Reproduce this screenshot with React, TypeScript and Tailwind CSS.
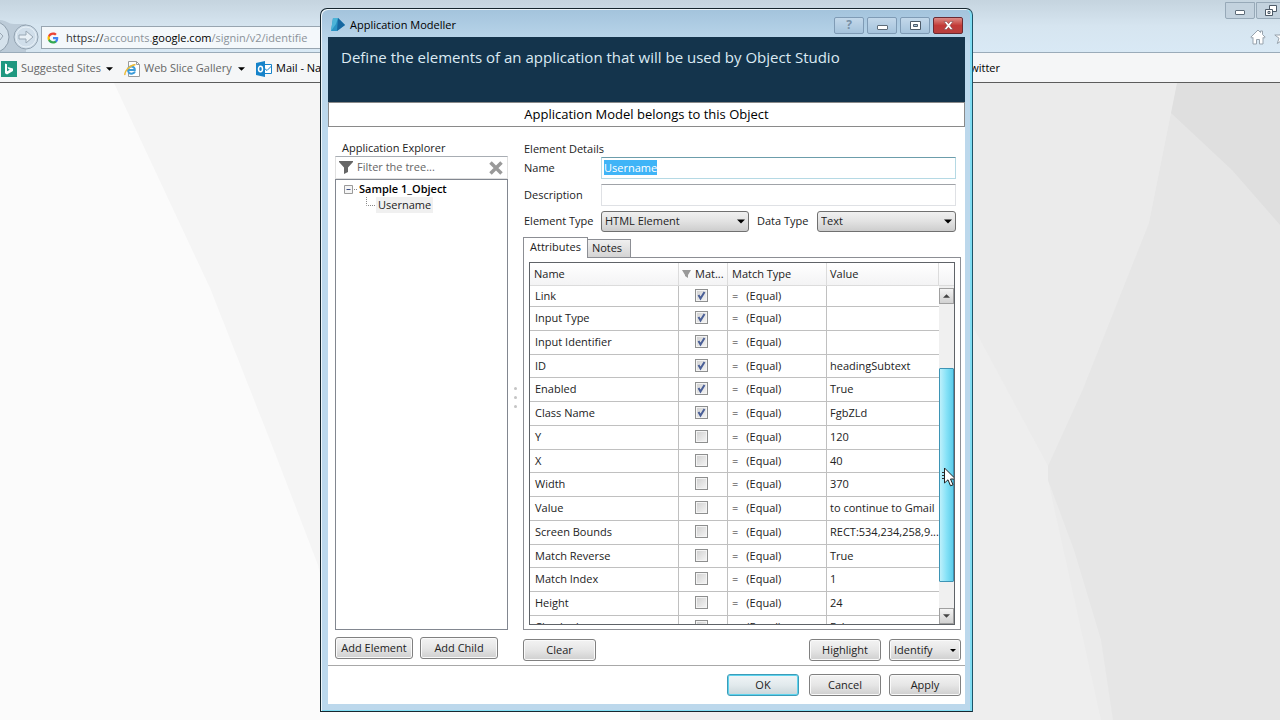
import { useEffect, useRef } from 'react';

type Attribute = { name: string; match: boolean; value: string };

const attributes: Attribute[] = [
    { name: 'Link', match: true, value: '' },
    { name: 'Input Type', match: true, value: '' },
    { name: 'Input Identifier', match: true, value: '' },
    { name: 'ID', match: true, value: 'headingSubtext' },
    { name: 'Enabled', match: true, value: 'True' },
    { name: 'Class Name', match: true, value: 'FgbZLd' },
    { name: 'Y', match: false, value: '120' },
    { name: 'X', match: false, value: '40' },
    { name: 'Width', match: false, value: '370' },
    { name: 'Value', match: false, value: 'to continue to Gmail' },
    { name: 'Screen Bounds', match: false, value: 'RECT:534,234,258,9...' },
    { name: 'Match Reverse', match: false, value: 'True' },
    { name: 'Match Index', match: false, value: '1' },
    { name: 'Height', match: false, value: '24' },
    { name: 'Checked', match: false, value: 'False' },
];

const buttonStyle =
    'h-[22px] rounded-[3px] border border-[#808080] bg-gradient-to-b from-[#f3f3f3] via-[#e6e6e6] to-[#cfcfcf] text-center shadow-[inset_0_0_0_1px_#fafafa]';
const selectStyle =
    'h-[21px] w-full appearance-none rounded-[3px] border border-[#707070] bg-gradient-to-b from-[#f0f0f0] via-[#e2e2e2] to-[#cdcdcd] pl-[3px] outline-none';

function DownArrow({ className }: { className: string }) {
    return (
        <svg viewBox="0 0 8 4" className={className} aria-hidden="true">
            <path d="M0 0h8L4 4z" fill="currentColor" />
        </svg>
    );
}

function BrowserWindow() {
    return (
        <div className="flex h-screen flex-col overflow-hidden bg-[#f7f7f7]">
            <header className="flex h-[53px] shrink-0 justify-between border-b border-[#9aabb9] bg-gradient-to-b from-[#c5d4df] via-[#d6e5f0] to-[#d9e9f5]">
                <div className="flex w-[600px] items-end">
                    <svg width="41" height="33" viewBox="0 0 41 33" fill="none" aria-hidden="true">
                        <path d="M0 1C6 1 8 5 14 5h16v28H0z" fill="#bccbd8" />
                        <path d="M26 5h15v28H26z" fill="#d6e5f0" />
                        <circle cx="-7" cy="18" r="16" fill="#d5e2ec" stroke="#8e9eac" />
                        <path d="M0 14l3 3-3 4" stroke="#9aa7b3" />
                        <circle cx="26" cy="18" r="12" fill="#d0deea" stroke="#93a3b1" />
                        <circle cx="26" cy="18" r="10" stroke="#e6f0f7" />
                        <path d="M19 16h7v-4l7 6-7 6v-4h-7z" fill="#e8f0f6" stroke="#99a8b5" />
                    </svg>
                    <div className="mb-[3px] flex h-[23px] flex-1 items-center border border-[#98a5b0] bg-[#f4f8fb]">
                        <svg className="ml-[5px] size-3" viewBox="0 0 24 24" aria-hidden="true">
                            <path d="M22.5 12.3c0-.8-.1-1.500-.2-2.300H12v4.500h5.900c-.3 1.400-1 2.500-2.200 3.300v2.800h3.600c2-1.900 3.200-4.700 3.200-8.300z" fill="#4285f4" />
                            <path d="M12 23c3 0 5.500-1 7.300-2.700l-3.600-2.800c-1 .7-2.200 1.100-3.700 1.100-2.900 0-5.300-1.900-6.200-4.500H2.200v2.800C4 20.500 7.700 23 12 23z" fill="#34a853" />
                            <path d="M5.800 14.100c-.5-1.400-.5-2.800 0-4.200V7.100H2.200c-1.600 3.100-1.600 6.700 0 9.800z" fill="#fbbc05" />
                            <path d="M12 5.400c1.600 0 3.100.6 4.200 1.600l3.200-3.200C17.500 2 15 1 12 1 7.700 1 4 3.500 2.200 7.100l3.600 2.800C6.700 7.300 9.100 5.400 12 5.400z" fill="#ea4335" />
                        </svg>
                        <span className="ml-[7px] pt-0.5 whitespace-nowrap text-[#8b9299]">
                            <span className="text-[#333]">https://</span>accounts.<span className="text-black">google.com</span>/signin/v2/identifie
                        </span>
                    </div>
                </div>
                <div className="w-[55px]">
                    <div className="flex gap-px pt-[2px]">
                        <button type="button" aria-label="Minimize browser" className="flex h-[17px] w-[30px] shrink-0 items-center justify-center rounded-b-[2px] border border-[#97a9b8] bg-[#c3d2de]">
                            <span className="mt-1 h-[5px] w-[10px] rounded-[1px] border border-[#5d6b78] bg-white"></span>
                        </button>
                        <button type="button" aria-label="Restore browser" className="flex h-[17px] w-[30px] shrink-0 items-center justify-center rounded-b-[2px] border border-[#97a9b8] bg-[#c3d2de]">
                            <svg width="12" height="11" viewBox="0 0 12 11" fill="#fff" stroke="#4e5b68" aria-hidden="true">
                                <path d="M4.500.5h7v6h-7z" />
                                <path d="M.5 4.500h7v6h-7z" />
                                <path d="M3 6.500h2v2H3z" />
                            </svg>
                        </button>
                    </div>
                    <div className="flex gap-2 pt-[10px] pl-[25px]">
                        <svg className="shrink-0" width="16" height="16" viewBox="0 0 16 16" fill="#fff" stroke="#98a3ad" aria-hidden="true">
                            <path d="M8 1L.8 8.200l1.200 1L3 8.400V15h3.500v-4.500h3V15H13V8.400l1 .8 1.200-1L12.500 5.500V2h-2v1.500z" />
                        </svg>
                        <svg className="shrink-0" width="16" height="16" viewBox="0 0 16 16" fill="#fff" stroke="#98a3ad" aria-hidden="true">
                            <path d="M8 1l2 5h5.200L11 9.200l1.700 5.300L8 11.300l-4.700 3.200L5 9.200.8 6H6z" />
                        </svg>
                    </div>
                </div>
            </header>

            <nav className="flex h-[30px] shrink-0 items-center justify-between border-b border-[#5c5c5c] bg-[#f5f6f7] pt-0.5 text-[#666]">
                <div className="flex items-center whitespace-nowrap">
                    <svg className="ml-px" width="16" height="16" viewBox="0 0 16 16" aria-hidden="true">
                        <path d="M0 0h16v16H0z" fill="#1f9880" />
                        <path d="M4 2.500l2 .8v6.900l2.800-1.500-1.400-.7-.9-2.100L12 7.600V10l-6 3.500-2-1.200z" fill="#fff" />
                    </svg>
                    <a href="#suggested" className="ml-1 w-[83px]">Suggested Sites</a>
                    <DownArrow className="ml-0.5 h-1 w-[7px] text-black" />
                    <svg className="ml-[11px]" width="16" height="16" viewBox="0 0 16 16" fill="none" aria-hidden="true">
                        <path d="M4.500.5h8l3 3v12h-11z" fill="#fff" stroke="#9c9c9c" />
                        <path d="M12.500.5v3h3" stroke="#9c9c9c" />
                        <path d="M11 10.500c-.7 2-4 3-6 1.200-2-2-1-6 2-6.200 2.500-.1 4 1.500 3.800 3.500H3.500" stroke="#3c9bd8" strokeWidth="2" />
                        <path d="M1 14C0 11 5 4.500 11.500 3.500" stroke="#edbb38" strokeWidth="1.500" />
                    </svg>
                    <a href="#gallery" className="ml-1 w-[92px]">Web Slice Gallery</a>
                    <DownArrow className="ml-0.5 h-1 w-[7px] text-black" />
                    <svg className="ml-[11px]" width="16" height="16" viewBox="0 0 16 16" fill="none" aria-hidden="true">
                        <path d="M8 3.500h7.500v9H8z" fill="#fff" stroke="#1683ca" />
                        <path d="M8 7l3 2.500L15.500 5" stroke="#1683ca" />
                        <path d="M0 2l9-2v16l-9-2z" fill="#1683ca" />
                        <ellipse cx="4.500" cy="8" rx="2" ry="2.700" stroke="#fff" strokeWidth="1.500" />
                    </svg>
                    <a href="#mail" className="ml-1 text-black">Mail - Nandan</a>
                </div>
                <a href="#twitter" className="mr-[280px] text-black">Twitter</a>
            </nav>

            <main className="min-h-0 flex-1">
                <svg className="size-full" viewBox="0 0 1280 637" preserveAspectRatio="none" aria-hidden="true">
                    <path d="M0 0h640v637H0z" fill="#fbfbfb" />
                    <path d="M114 0h526v620H352L318 482 275 370 210 205z" fill="#f5f5f5" />
                    <path d="M640 0h640v637H640z" fill="#ebebeb" />
                    <path d="M970 238l78 145v14l53 240H640V200z" fill="#eeeeee" />
                    <path d="M1171 30l-22 110-66 166-35 77v14l26 70 27 90 12 80h167V30z" fill="#e6e6e6" />
                    <path d="M1177 0h103v142l-48-55-61-57z" fill="#dfdfdf" />
                </svg>
            </main>
        </div>
    );
}

function TitleBar() {
    const controlStyle = 'flex h-[17px] w-[30px] items-center justify-center rounded-[2px] border border-[#7f9bb5] bg-gradient-to-b from-[#c3d8ea] to-[#a5c3dc]';
    return (
        <div className="flex h-7 shrink-0 items-center pt-1">
            <svg className="ml-[3px]" width="14" height="14" viewBox="0 0 14 14" aria-hidden="true">
                <path d="M2 0h5l7 7-8 6H0z" fill="#2a93c4" />
                <path d="M7 0l7 7-8 6z" fill="#1767a0" />
                <path d="M2 0h5l-2 6-5 7z" fill="#4cb4d8" />
            </svg>
            <h1 className="ml-[5px] flex-1 text-black">Application Modeller</h1>
            <div className="mr-0.5 flex gap-[3px]">
                <button type="button" aria-label="Help" className={controlStyle}>
                    <span className="text-xs leading-3 font-bold text-[#7890a6]">?</span>
                </button>
                <button type="button" aria-label="Minimize" className={controlStyle}>
                    <span className="mt-1 h-[5px] w-[11px] rounded-[1px] border border-[#5d6b78] bg-white"></span>
                </button>
                <button type="button" aria-label="Maximize" className={controlStyle}>
                    <svg width="11" height="9" viewBox="0 0 11 9" aria-hidden="true">
                        <path d="M.5.5h10v8H.5z" fill="#fff" stroke="#4e5b68" />
                        <path d="M3.500 3.500h4v2h-4z" fill="#a9c4db" stroke="#4e5b68" />
                    </svg>
                </button>
                <button type="button" aria-label="Close" className="flex h-[17px] w-[30px] items-center justify-center rounded-[2px] border border-[#6b2a32] bg-gradient-to-b from-[#dc8a86] via-[#c23a38] to-[#b8403e]">
                    <svg width="11" height="9" viewBox="0 0 11 9" aria-hidden="true">
                        <path d="M1 .5h2.500l2 2.200 2-2.200H10L7 4.500l3 4H7.500l-2-2.200-2 2.200H1l3-4z" fill="#fff" stroke="#6d3a40" strokeWidth=".5" />
                    </svg>
                </button>
            </div>
        </div>
    );
}

function Explorer() {
    return (
        <section className="flex w-[173px] shrink-0 flex-col">
            <h2 className="h-[15px] pl-[7px] leading-[13px]">Application Explorer</h2>
            <div className="flex h-[23px] items-center border border-[#e0e0e0] border-t-[#a8adb3]">
                <svg className="ml-[3px] shrink-0" width="14" height="13" viewBox="0 0 14 13" aria-hidden="true">
                    <path d="M0 0h14v1L9 6.500V11l-4 2V6.500L0 1z" fill="#666" />
                </svg>
                <input
                    aria-label="Filter the tree"
                    placeholder="Filter the tree..."
                    className="ml-1 h-5 min-w-0 flex-1 pb-0.5 outline-none placeholder:text-[#666]"
                />
                <button type="button" aria-label="Clear filter" className="mr-1">
                    <svg width="14" height="14" viewBox="0 0 14 14" aria-hidden="true">
                        <path d="M1.500 1.500l11 11M12.500 1.500l-11 11" stroke="#999" strokeWidth="3.500" />
                    </svg>
                </button>
            </div>
            <div className="flex-1 border border-[#828790] pt-px pl-2">
                <div className="flex h-4 items-center">
                    <svg width="15" height="9" viewBox="0 0 15 9" fill="none" aria-hidden="true">
                        <path d="M.5.5h8v8h-8z" fill="#f5f5f5" stroke="#9a9a9a" />
                        <path d="M2.500 4.500h4" stroke="#3d4f86" />
                        <path d="M10 4.500h4" stroke="#888" strokeDasharray="1 1" />
                    </svg>
                    <span className="leading-4 font-semibold text-black">Sample 1_Object</span>
                </div>
                <div className="flex h-4 items-center pl-[22px]">
                    <svg width="10" height="16" viewBox="0 0 10 16" fill="none" aria-hidden="true">
                        <path d="M.5 0v8.500h9" stroke="#888" strokeDasharray="1 1" />
                    </svg>
                    <span className="bg-[#f0f0f0] px-0.5 leading-4">Username</span>
                </div>
            </div>
            <div className="mt-[7px] flex gap-[7px] pb-[6px]">
                <button type="button" className={`${buttonStyle} w-[78px]`}>Add Element</button>
                <button type="button" className={`${buttonStyle} w-[78px]`}>Add Child</button>
            </div>
        </section>
    );
}

function AttributeRow({ attribute }: { attribute: Attribute }) {
    return (
        <tr className="h-6 first:h-[21px] nth-[4n]:h-[23px]">
            <td className="border-r pl-[5px]">{attribute.name}</td>
            <td className="border-r pr-[3px]">
                <span className="relative mx-auto block size-[13px]">
                    <input
                        type="checkbox"
                        aria-label={`Match ${attribute.name}`}
                        defaultChecked={attribute.match}
                        className="peer block size-[13px] appearance-none border border-[#8e8f8f] bg-gradient-to-br from-[#cfcfcf] to-[#f6f6f6] shadow-[inset_0_0_0_1px_#f4f4f4]"
                    />
                    <svg viewBox="0 0 13 13" fill="none" className="pointer-events-none absolute inset-0 hidden peer-checked:block" aria-hidden="true">
                        <path d="M3.500 6l2 3.500L9.500 3" stroke="#4a5f97" strokeWidth="2" />
                    </svg>
                </span>
            </td>
            <td className="border-r pl-1">
                <span className="flex gap-2">
                    <span>=</span>
                    <span>(Equal)</span>
                </span>
            </td>
            <td className="pl-[3px] whitespace-nowrap">{attribute.value}</td>
        </tr>
    );
}

function AttributeTable() {
    return (
        <div className="flex min-h-0 flex-1 overflow-hidden border border-[#5f6368]">
            <div className="min-h-0 flex-1 overflow-hidden">
                <table className="w-full table-fixed border-separate border-spacing-0 text-left [&_td]:border-b [&_td]:border-[#c0c0c0] [&_td]:pt-0 [&_td]:pb-0.5 [&_td]:leading-[15px]">
                    <colgroup>
                        <col />
                        <col className="w-[49px]" />
                        <col className="w-[99px]" />
                        <col className="w-[112px]" />
                    </colgroup>
                    <thead>
                        <tr className="h-[23px] bg-gradient-to-b from-white to-[#f3f3f4] [&>th]:border-r [&>th]:border-b [&>th]:border-[#dcdcdc] [&>th]:font-normal">
                            <th className="pl-1">Name</th>
                            <th>
                                <span className="flex items-center gap-1 pl-[3px]">
                                    <svg width="9" height="8" viewBox="0 0 9 8" aria-hidden="true">
                                        <path d="M0 0h9L6 5v3L3 6V5z" fill="#999" />
                                    </svg>
                                    Mat...
                                </span>
                            </th>
                            <th className="pl-1">Match Type</th>
                            <th className="pl-[3px]">Value</th>
                        </tr>
                    </thead>
                    <tbody>
                        {attributes.map((attribute) => (
                            <AttributeRow key={attribute.name} attribute={attribute} />
                        ))}
                    </tbody>
                </table>
            </div>
            <div className="flex w-[15px] shrink-0 flex-col bg-[#f0f0f0]">
                <div className="h-[23px] shrink-0 border-b border-[#dcdcdc] bg-gradient-to-b from-white to-[#f3f3f4]"></div>
                <button type="button" aria-label="Scroll up" className="mt-0.5 flex h-4 shrink-0 items-center justify-center border border-[#a0a0a0] bg-gradient-to-b from-[#f4f4f4] to-[#d2d2d2]">
                    <DownArrow className="h-1 w-[7px] rotate-180 text-[#444]" />
                </button>
                <div className="relative flex-1 pt-16">
                    <div className="h-[214px] rounded-[1px] border border-[#3d94b5] bg-gradient-to-r from-[#bdf0fb] via-[#86e2f7] to-[#5bcdea]"></div>
                    <svg className="absolute top-[163px] left-[3px]" width="14" height="21" viewBox="0 0 14 21" aria-hidden="true">
                        <path d="M0 5.500h3M0 8.500h3M0 11.500h3" stroke="#333" />
                        <path d="M2.500 1v15l3.500-3.200 2.500 6 2.500-1-2.500-5.800h5z" fill="#fff" stroke="#222" />
                    </svg>
                </div>
                <button type="button" aria-label="Scroll down" className="flex h-4 shrink-0 items-center justify-center border border-[#a0a0a0] bg-gradient-to-b from-[#f4f4f4] to-[#d2d2d2]">
                    <DownArrow className="h-1 w-[7px] text-[#444]" />
                </button>
            </div>
        </div>
    );
}

function ElementDetails() {
    const nameRef = useRef<HTMLInputElement>(null);

    // The name is selected as soon as the element is opened
    useEffect(() => {
        nameRef.current?.focus();
        nameRef.current?.select();
    }, []);

    return (
        <section className="flex min-w-0 flex-1 flex-col">
            <h2 className="h-4 pl-px leading-[15px]">Element Details</h2>
            <div className="flex flex-col gap-[5px] pr-[5px] pl-px">
                <div className="flex items-center">
                    <label htmlFor="name" className="w-[77px]">Name</label>
                    <input
                        id="name"
                        ref={nameRef}
                        defaultValue="Username"
                        className="h-[22px] min-w-0 flex-1 border border-[#b5d9e4] border-t-[#6c9dab] px-0.5 pb-0.5 outline-none selection:bg-[#3fb4f7] selection:text-white"
                    />
                </div>
                <div className="flex items-center">
                    <label htmlFor="description" className="w-[77px]">Description</label>
                    <input id="description" className="h-[22px] min-w-0 flex-1 border border-[#dfe1e5] border-t-[#a0a3a8] px-0.5 outline-none" />
                </div>
                <div className="flex items-center">
                    <label htmlFor="element-type" className="w-[77px]">Element Type</label>
                    <div className="relative w-[148px]">
                        <select id="element-type" className={selectStyle}>
                            <option>HTML Element</option>
                        </select>
                        <DownArrow className="pointer-events-none absolute top-2 right-1 h-[5px] w-2 text-black" />
                    </div>
                    <label htmlFor="data-type" className="ml-2 w-[60px]">Data Type</label>
                    <div className="relative flex-1">
                        <select id="data-type" className={selectStyle}>
                            <option>Text</option>
                        </select>
                        <DownArrow className="pointer-events-none absolute top-2 right-1 h-[5px] w-2 text-black" />
                    </div>
                </div>
            </div>

            <div role="tablist" className="mt-[5px] flex items-end">
                <button type="button" role="tab" aria-selected="true" className="z-10 -mb-px h-[21px] w-[65px] border border-b-0 border-[#8c8e94] bg-white pb-0.5">
                    Attributes
                </button>
                <button type="button" role="tab" aria-selected="false" className="h-[18px] w-[43px] border border-b-0 border-l-0 border-[#8c8e94] bg-gradient-to-b from-[#f0f0f0] to-[#d4d4d4] pr-1">
                    Notes
                </button>
            </div>
            <div className="flex min-h-0 flex-1 flex-col border border-[#8c8e94] px-[5px] pt-1 pb-1">
                <AttributeTable />
            </div>

            <div className="mt-[9px] flex justify-between pb-1">
                <button type="button" className={`${buttonStyle} w-[73px]`}>Clear</button>
                <div className="flex gap-2">
                    <button type="button" className={`${buttonStyle} w-[72px]`}>Highlight</button>
                    <button type="button" className={`${buttonStyle} flex w-[72px] items-center justify-between px-1`}>
                        Identify
                        <DownArrow className="h-[3px] w-[6px] text-black" />
                    </button>
                </div>
            </div>
        </section>
    );
}

export default function App() {
    return (
        <div className="relative font-['Open_Sans','Noto_Sans',sans-serif] text-[11px] text-[#222]">
            <BrowserWindow />

            <div className="absolute inset-0 flex justify-center py-2 pl-[13px]">
                <div role="dialog" aria-label="Application Modeller" className="flex w-full max-w-[653px] flex-col rounded-t-[7px] border border-[#16262e] border-r-[#1d5468] bg-gradient-to-b from-[#a3c3dc] via-[#bcd8ec] via-5% to-[#bcd8ec] px-[7px] pb-[7px] shadow-[inset_1px_1px_0_#eef6fb,inset_-2px_0_0_#7fdcf2,inset_0_-1px_0_#7fdcf2]">
                    <TitleBar />
                    <div className="flex min-h-0 flex-1 flex-col bg-white">
                        <p className="h-[65px] shrink-0 bg-[#14344c] pt-[9px] pl-[13px] text-[15px] text-[#dbeaf3]">
                            Define the elements of an application that will be used by Object Studio
                        </p>
                        <p className="h-[25px] shrink-0 border border-[#8a8a8a] text-center text-[13px] leading-[23px] text-black">
                            Application Model belongs to this Object
                        </p>
                        <div className="flex min-h-0 flex-1 pt-[14px] pr-1 pl-[7px]">
                            <Explorer />
                            <div className="flex w-[15px] shrink-0 flex-col items-center justify-center gap-[6px] pb-3">
                                <span className="size-[3px] rounded-full bg-[#c4c4c4]"></span>
                                <span className="size-[3px] rounded-full bg-[#c4c4c4]"></span>
                                <span className="size-[3px] rounded-full bg-[#c4c4c4]"></span>
                            </div>
                            <ElementDetails />
                        </div>
                        <footer className="flex shrink-0 justify-end gap-2 border-t border-[#a8a8a8] pt-2 pr-1 pb-2">
                            <button type="button" className="mr-0.5 h-[22px] w-[72px] rounded-[3px] border border-[#3c9cb8] bg-gradient-to-b from-[#f0f5f7] via-[#e2eaed] to-[#c9d6da] shadow-[inset_0_0_0_1px_#5ed3ee]">OK</button>
                            <button type="button" className={`${buttonStyle} w-[72px]`}>Cancel</button>
                            <button type="button" className={`${buttonStyle} w-[72px]`}>Apply</button>
                        </footer>
                    </div>
                </div>
            </div>
        </div>
    );
}
